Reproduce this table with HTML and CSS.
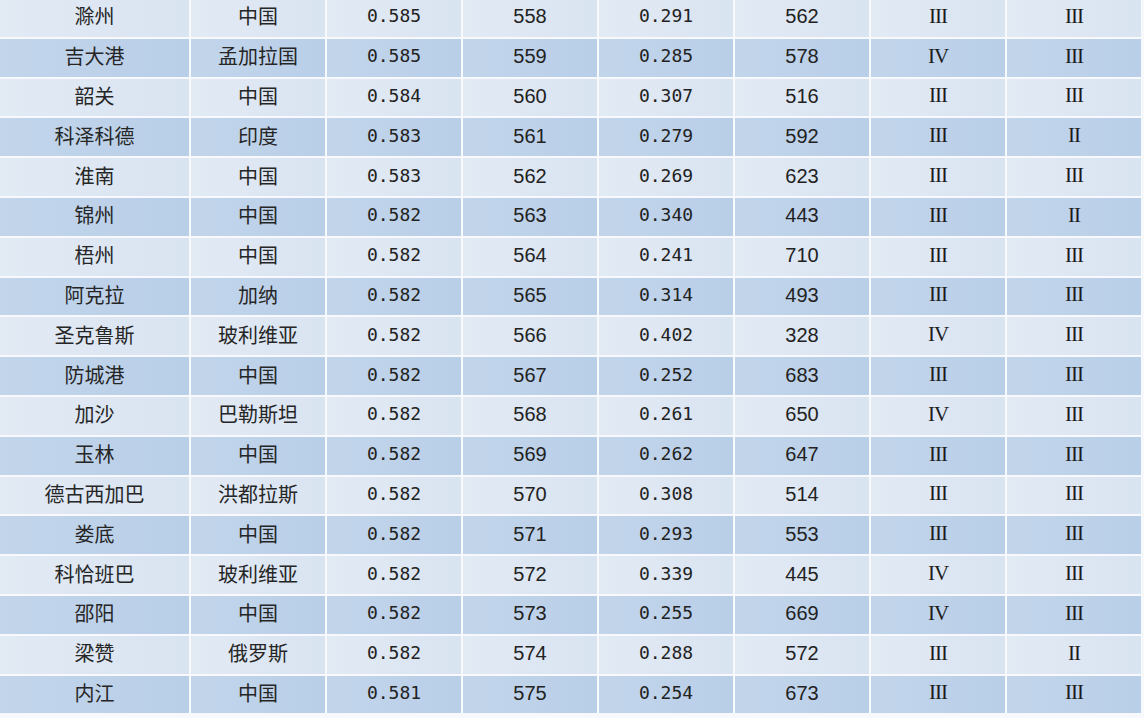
FILE: index.html
```html
<!DOCTYPE html>
<html lang="zh">
<head>
<meta charset="utf-8">
<title>城市排名</title>
<link rel="stylesheet" href="styles.css">
</head>
<body>
<table class="rank">
<colgroup>
<col class="c-wide"><col class="c"><col class="c"><col class="c"><col class="c"><col class="c"><col class="c"><col class="c">
</colgroup>
<tbody>
<tr class="lt"><td class="cjk">滁州</td><td class="cjk">中国</td><td class="mono">0.585</td><td class="sans">558</td><td class="mono">0.291</td><td class="sans">562</td><td class="rom">III</td><td class="rom">III</td></tr>
<tr class="dk"><td class="cjk">吉大港</td><td class="cjk">孟加拉国</td><td class="mono">0.585</td><td class="sans">559</td><td class="mono">0.285</td><td class="sans">578</td><td class="rom">IV</td><td class="rom">III</td></tr>
<tr class="lt"><td class="cjk">韶关</td><td class="cjk">中国</td><td class="mono">0.584</td><td class="sans">560</td><td class="mono">0.307</td><td class="sans">516</td><td class="rom">III</td><td class="rom">III</td></tr>
<tr class="dk"><td class="cjk">科泽科德</td><td class="cjk">印度</td><td class="mono">0.583</td><td class="sans">561</td><td class="mono">0.279</td><td class="sans">592</td><td class="rom">III</td><td class="rom">II</td></tr>
<tr class="lt"><td class="cjk">淮南</td><td class="cjk">中国</td><td class="mono">0.583</td><td class="sans">562</td><td class="mono">0.269</td><td class="sans">623</td><td class="rom">III</td><td class="rom">III</td></tr>
<tr class="dk"><td class="cjk">锦州</td><td class="cjk">中国</td><td class="mono">0.582</td><td class="sans">563</td><td class="mono">0.340</td><td class="sans">443</td><td class="rom">III</td><td class="rom">II</td></tr>
<tr class="lt"><td class="cjk">梧州</td><td class="cjk">中国</td><td class="mono">0.582</td><td class="sans">564</td><td class="mono">0.241</td><td class="sans">710</td><td class="rom">III</td><td class="rom">III</td></tr>
<tr class="dk"><td class="cjk">阿克拉</td><td class="cjk">加纳</td><td class="mono">0.582</td><td class="sans">565</td><td class="mono">0.314</td><td class="sans">493</td><td class="rom">III</td><td class="rom">III</td></tr>
<tr class="lt"><td class="cjk">圣克鲁斯</td><td class="cjk">玻利维亚</td><td class="mono">0.582</td><td class="sans">566</td><td class="mono">0.402</td><td class="sans">328</td><td class="rom">IV</td><td class="rom">III</td></tr>
<tr class="dk"><td class="cjk">防城港</td><td class="cjk">中国</td><td class="mono">0.582</td><td class="sans">567</td><td class="mono">0.252</td><td class="sans">683</td><td class="rom">III</td><td class="rom">III</td></tr>
<tr class="lt"><td class="cjk">加沙</td><td class="cjk">巴勒斯坦</td><td class="mono">0.582</td><td class="sans">568</td><td class="mono">0.261</td><td class="sans">650</td><td class="rom">IV</td><td class="rom">III</td></tr>
<tr class="dk"><td class="cjk">玉林</td><td class="cjk">中国</td><td class="mono">0.582</td><td class="sans">569</td><td class="mono">0.262</td><td class="sans">647</td><td class="rom">III</td><td class="rom">III</td></tr>
<tr class="lt"><td class="cjk">德古西加巴</td><td class="cjk">洪都拉斯</td><td class="mono">0.582</td><td class="sans">570</td><td class="mono">0.308</td><td class="sans">514</td><td class="rom">III</td><td class="rom">III</td></tr>
<tr class="dk"><td class="cjk">娄底</td><td class="cjk">中国</td><td class="mono">0.582</td><td class="sans">571</td><td class="mono">0.293</td><td class="sans">553</td><td class="rom">III</td><td class="rom">III</td></tr>
<tr class="lt"><td class="cjk">科恰班巴</td><td class="cjk">玻利维亚</td><td class="mono">0.582</td><td class="sans">572</td><td class="mono">0.339</td><td class="sans">445</td><td class="rom">IV</td><td class="rom">III</td></tr>
<tr class="dk"><td class="cjk">邵阳</td><td class="cjk">中国</td><td class="mono">0.582</td><td class="sans">573</td><td class="mono">0.255</td><td class="sans">669</td><td class="rom">IV</td><td class="rom">III</td></tr>
<tr class="lt"><td class="cjk">梁赞</td><td class="cjk">俄罗斯</td><td class="mono">0.582</td><td class="sans">574</td><td class="mono">0.288</td><td class="sans">572</td><td class="rom">III</td><td class="rom">II</td></tr>
<tr class="dk"><td class="cjk">内江</td><td class="cjk">中国</td><td class="mono">0.581</td><td class="sans">575</td><td class="mono">0.254</td><td class="sans">673</td><td class="rom">III</td><td class="rom">III</td></tr>
</tbody>
</table>
</body>
</html>
```
FILE: styles.css
```css
html, body {
  margin: 0;
  padding: 0;
  background: #f7f9fc;
  overflow: hidden;
}

.rank {
  table-layout: fixed;
  border-collapse: separate;
  border-spacing: 2px;
  margin: -3px 0 0 -2px;
  width: 1145px;
  color: #1c1c1c;
}

.c-wide { width: 189px; }
.c { width: 134px; }

.rank td {
  height: 37.8px;
  padding: 0 0 3px 0;
  box-sizing: border-box;
  text-align: center;
  vertical-align: middle;
  line-height: 1;
  white-space: nowrap;
}

.lt td {
  background: linear-gradient(90deg, #e2eaf4 0%, #d9e4f1 100%);
}

.dk td {
  background: linear-gradient(90deg, #c2d5eb 0%, #b9cfe8 100%);
}

.cjk {
  font-family: "Noto Sans CJK SC", sans-serif;
  font-size: 20px;
  color: #262626;
}

.mono {
  font-family: "DejaVu Sans Mono", monospace;
  font-size: 18px;
  color: #222;
}

.sans {
  font-family: "Liberation Sans", Arial, sans-serif;
  font-size: 20px;
  color: #222;
}

.rom {
  font-family: "Liberation Serif", serif;
  font-size: 21px;
  letter-spacing: -1px;
}
```
